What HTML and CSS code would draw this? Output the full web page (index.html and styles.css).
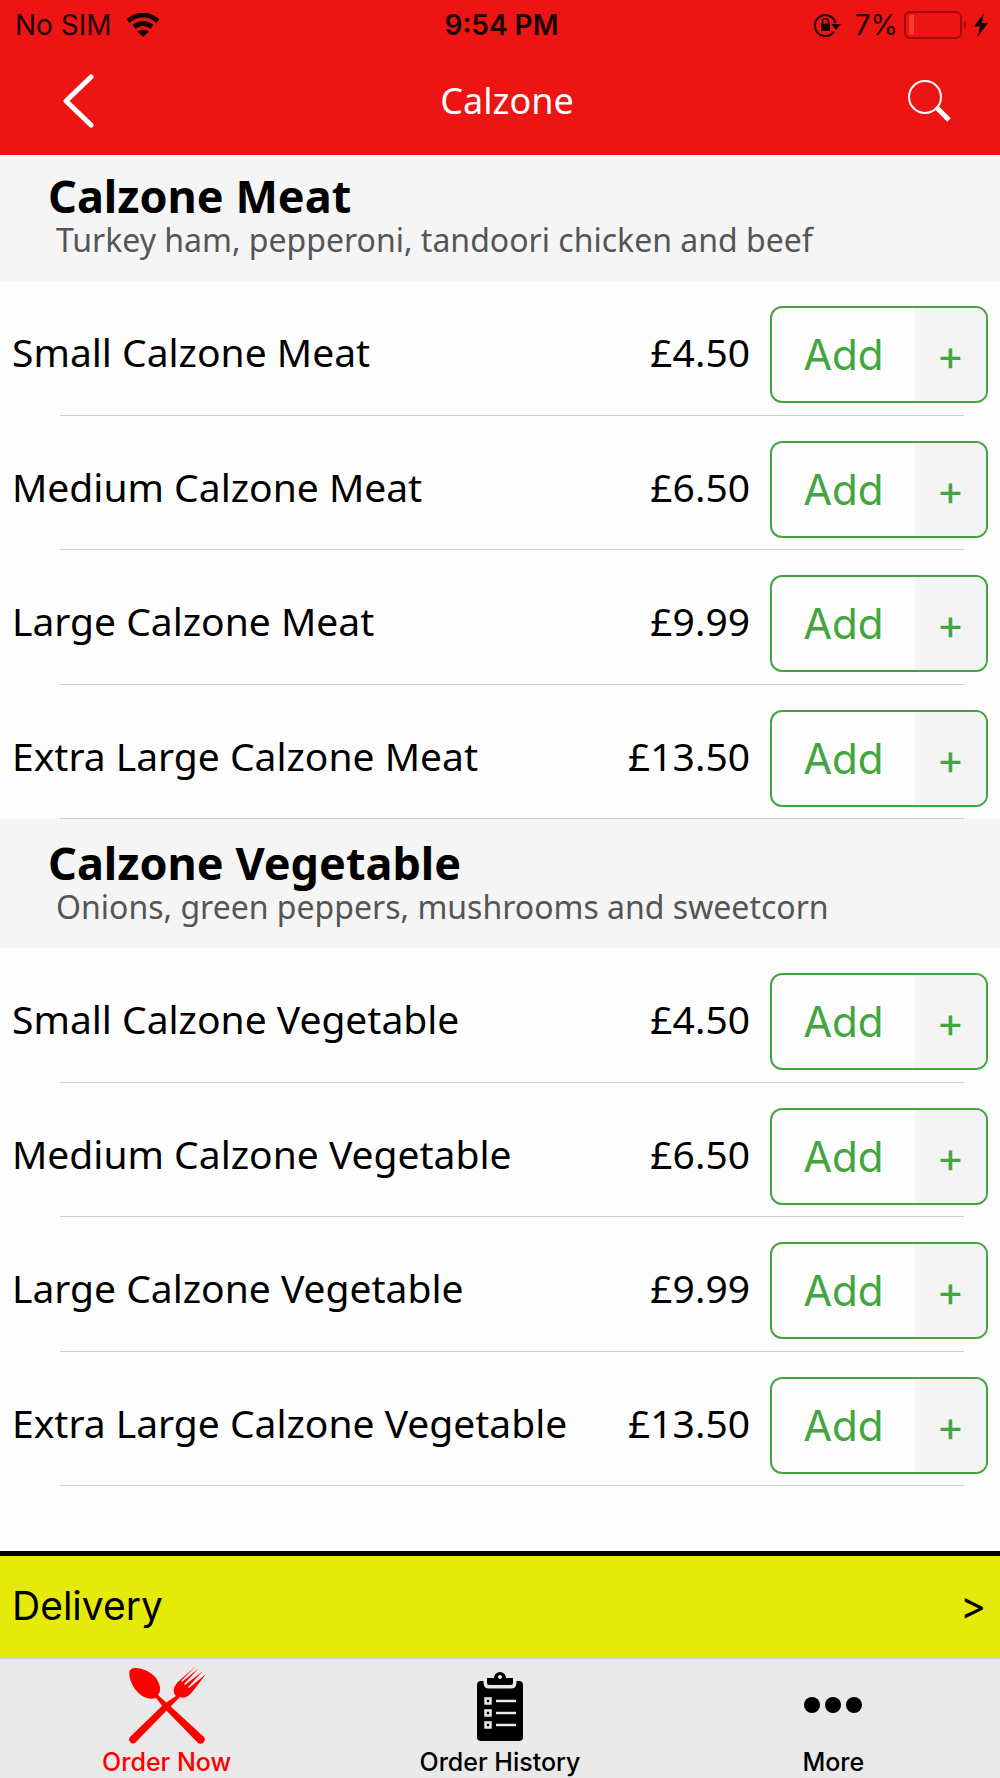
FILE: index.html
```html
<!DOCTYPE html>
<html lang="en">
<head>
    <meta charset="UTF-8">
    <meta name="viewport" content="width=device-width, initial-scale=1.0">
    <title>Calzone</title>
    <link rel="stylesheet" href="styles.css">
</head>
<body>
    <header class="top">
        <div class="status-bar">
            <div class="status-left">
                <span>No SIM</span>
                <svg class="wifi" viewBox="0 0 34 24" width="34" height="24">
                    <path d="M2 8Q17-4 32 8" fill="none" stroke="#1a0303" stroke-width="5"/>
                    <path d="M8 14Q17 7 26 14" fill="none" stroke="#1a0303" stroke-width="5"/>
                    <path d="M17 24L11 18.500Q17 14.500 23 18.500Z" fill="#1a0303"/>
                </svg>
            </div>
            <span class="clock">9:54 PM</span>
            <div class="status-right">
                <svg class="lock" viewBox="0 0 28 24" width="28" height="24">
                    <path d="M21 18.500A10.500 10.500 0 1 1 22.500 10" fill="none" stroke="#1a0303" stroke-width="2"/>
                    <path d="M18.500 11H28L23 17Z" fill="#1a0303"/>
                    <rect x="8" y="10.500" width="9" height="7.500" rx="1" fill="#1a0303"/>
                    <path d="M9.500 11V8.500a3 3 0 0 1 6 0V11" fill="none" stroke="#1a0303" stroke-width="1.500"/>
                </svg>
                <span>7%</span>
                <svg class="battery" viewBox="0 0 64 28" width="64" height="28">
                    <rect x="1" y="1" width="56" height="26" rx="5" fill="none" stroke="#a00c0c" stroke-width="2"/>
                    <path d="M10 4v20H7a2 2 0 0 1-2-2V6a2 2 0 0 1 2-2z" fill="#ff3b30"/>
                    <path d="M60 9.500q4 4.500 0 9z" fill="#a00c0c"/>
                </svg>
                <svg class="bolt" viewBox="0 0 14 24" width="14" height="24">
                    <path d="M10 0L0 13.500H6L3.500 24L14 10H8Z" fill="#1a0303"/>
                </svg>
            </div>
        </div>
        <nav class="nav-bar">
            <button class="icon-button" aria-label="Back">
                <svg viewBox="0 0 32 56" width="32" height="56">
                    <path d="M29 4L4 28L29 52" fill="none" stroke="#fff" stroke-width="5" stroke-linecap="round" stroke-linejoin="round"/>
                </svg>
            </button>
            <h1>Calzone</h1>
            <button class="icon-button" aria-label="Search">
                <svg viewBox="0 0 44 44" width="44" height="44">
                    <circle cx="17" cy="18" r="16" fill="none" stroke="#fff" stroke-width="2"/>
                    <path d="M28 28L41 41" stroke="#fff" stroke-width="5"/>
                </svg>
            </button>
        </nav>
    </header>

    <main class="menu">
        <section>
            <div class="section-head">
                <h2>Calzone Meat</h2>
                <p>Turkey ham, pepperoni, tandoori chicken and beef</p>
            </div>
            <ul class="items">
                <li class="item">
                    <span class="name">Small Calzone Meat</span>
                    <span class="price">£4.50</span>
                    <button class="add"><span class="label">Add</span><span class="plus">+</span></button>
                </li>
                <li class="item">
                    <span class="name">Medium Calzone Meat</span>
                    <span class="price">£6.50</span>
                    <button class="add"><span class="label">Add</span><span class="plus">+</span></button>
                </li>
                <li class="item">
                    <span class="name">Large Calzone Meat</span>
                    <span class="price">£9.99</span>
                    <button class="add"><span class="label">Add</span><span class="plus">+</span></button>
                </li>
                <li class="item">
                    <span class="name">Extra Large Calzone Meat</span>
                    <span class="price">£13.50</span>
                    <button class="add"><span class="label">Add</span><span class="plus">+</span></button>
                </li>
            </ul>
        </section>

        <section>
            <div class="section-head">
                <h2>Calzone Vegetable</h2>
                <p>Onions, green peppers, mushrooms and sweetcorn</p>
            </div>
            <ul class="items">
                <li class="item">
                    <span class="name">Small Calzone Vegetable</span>
                    <span class="price">£4.50</span>
                    <button class="add"><span class="label">Add</span><span class="plus">+</span></button>
                </li>
                <li class="item">
                    <span class="name">Medium Calzone Vegetable</span>
                    <span class="price">£6.50</span>
                    <button class="add"><span class="label">Add</span><span class="plus">+</span></button>
                </li>
                <li class="item">
                    <span class="name">Large Calzone Vegetable</span>
                    <span class="price">£9.99</span>
                    <button class="add"><span class="label">Add</span><span class="plus">+</span></button>
                </li>
                <li class="item">
                    <span class="name">Extra Large Calzone Vegetable</span>
                    <span class="price">£13.50</span>
                    <button class="add"><span class="label">Add</span><span class="plus">+</span></button>
                </li>
            </ul>
        </section>
    </main>

    <footer>
        <button class="delivery"><span>Delivery</span><span class="arrow">&gt;</span></button>
        <nav class="tabs">
            <a href="#" class="tab active">
                <svg viewBox="0 0 78 78" width="78" height="78">
                    <!-- spoon -->
                    <path d="M3 3C10 0 22 5 28 12C33 19 33 25 30 29L40 38L75 70A4 4 0 0 1 70 77L35 41L28 32C20 35 10 29 5 20C1 12 0 6 3 3Z" fill="currentColor"/>
                    <!-- fork -->
                    <path d="M68 0L52 14C45 20 44 26 48 30L36 38L2 71A4 4 0 0 0 7 77L41 42L52 31C57 33 61 30 65 25L78 8L61 22L60 21L75 5L57 19L56 18L71 2L54 16L53 15Z" fill="currentColor"/>
                </svg>
                <span>Order Now</span>
            </a>
            <a href="#" class="tab">
                <svg viewBox="0 0 48 78" width="48" height="78">
                    <rect x="1" y="15" width="46" height="60" rx="4" fill="currentColor"/>
                    <path d="M9 13v4q0 4 4 4h22q4 0 4-4v-4" fill="#e9e9e9" stroke="#e9e9e9" stroke-width="3"/>
                    <path d="M11 12h7a6 6 0 0 1 12 0h7v5q0 2-2 2H13q-2 0-2-2z" fill="currentColor"/>
                    <circle cx="24" cy="11" r="2" fill="#e9e9e9"/>
                    <path d="M9.500 32.500h5v5h-5zM9.500 44.500h5v5h-5zM9.500 56.500h5v5h-5z" fill="none" stroke="#e9e9e9" stroke-width="2.500"/>
                    <path d="M20 35h20M20 47h20M20 59h20" stroke="#e9e9e9" stroke-width="2.500"/>
                </svg>
                <span>Order History</span>
            </a>
            <a href="#" class="tab">
                <svg viewBox="0 0 60 78" width="60" height="78">
                    <circle cx="9" cy="39" r="8" fill="currentColor"/>
                    <circle cx="30" cy="39" r="8" fill="currentColor"/>
                    <circle cx="51" cy="39" r="8" fill="currentColor"/>
                </svg>
                <span>More</span>
            </a>
        </nav>
    </footer>
</body>
</html>
```
FILE: styles.css
```css
* {
    margin: 0;
    padding: 0;
    box-sizing: border-box;
}

body {
    display: flex;
    flex-direction: column;
    min-height: 100vh;
    background: #fdfdfd;
    color: #000;
    font-family: "Noto Sans", sans-serif;
}

button {
    background: none;
    border: none;
    color: inherit;
    font: inherit;
    cursor: pointer;
}

svg {
    display: block;
}

.top {
    background: #ec1514;
}

.status-bar {
    display: grid;
    grid-template-columns: 1fr auto 1fr;
    align-items: center;
    height: 50px;
    padding: 0 12px 0 15px;
    color: #1a0303;
    font-family: Inter, sans-serif;
    font-size: 28px;
}

.status-left, .status-right {
    display: flex;
    align-items: center;
    gap: 14px;
}

.status-right {
    justify-content: flex-end;
    gap: 6px;
}

.lock {
    margin-right: 8px;
}

.clock {
    font-weight: 600;
}

.nav-bar {
    display: flex;
    justify-content: space-between;
    align-items: center;
    height: 105px;
    padding: 0 48px 4px 62px;
    color: #fff;
}

.nav-bar h1 {
    padding-left: 12px;
    font-size: 36px;
    font-weight: 400;
}

.section-head {
    height: 129px;
    padding: 18px 48px 0;
    background: #f5f5f5;
}

.menu section:first-child .section-head {
    height: 126px;
    padding-top: 15px;
}

.section-head h2 {
    font-size: 45px;
    line-height: 52px;
}

.section-head p {
    padding-left: 8px;
    color: #555;
    font-size: 32px;
    line-height: 36px;
}

.items {
    list-style: none;
}

.item {
    display: flex;
    align-items: center;
    height: 134px;
    padding: 12px 12px 0;
    /* inset divider */
    background: linear-gradient(#cdcdcd, #cdcdcd) 60px 100% / calc(100% - 96px) 1px no-repeat;
    font-size: 39px;
}

.item:nth-child(odd) {
    height: 135px;
}

.name, .price {
    padding-bottom: 6px;
}

.name {
    flex: 1;
}

.add {
    display: flex;
    width: 218px;
    height: 97px;
    margin-left: 20px;
    border: 2px solid #43a540;
    border-radius: 12px;
    overflow: hidden;
    color: #43a540;
    font-family: Inter, sans-serif;
    font-size: 42px;
    line-height: 93px;
}

.label {
    flex: 2;
}

.plus {
    flex: 1;
    background: #f4f4f5;
}

footer {
    margin-top: auto;
    font-family: Inter, sans-serif;
}

.delivery {
    display: flex;
    justify-content: space-between;
    align-items: center;
    width: 100%;
    height: 106px;
    padding: 0 14px 2px 12px;
    border-top: 5px solid #000;
    background: #e6ea0a;
    font-size: 39px;
}

.tabs {
    display: grid;
    grid-template-columns: repeat(3, 1fr);
    height: 121px;
    padding-top: 7px;
    border-top: 2px solid #cfd0d4;
    background: #e9e9e9;
    font-size: 25px;
    font-weight: 500;
    line-height: 36px;
}

.tab {
    display: flex;
    flex-direction: column;
    align-items: center;
    color: #000;
    text-decoration: none;
}

.tab.active {
    color: #f00;
}
```
